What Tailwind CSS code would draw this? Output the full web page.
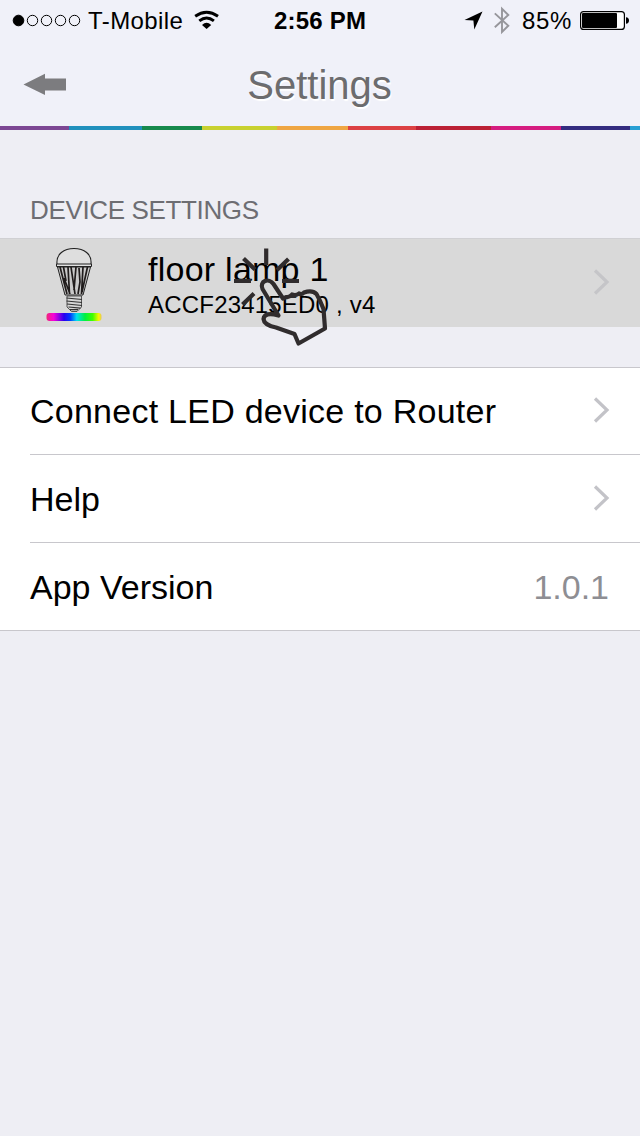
<!DOCTYPE html>
<html lang="en">
<head>
<meta charset="utf-8">
<title>Settings</title>
<script src="https://cdn.jsdelivr.net/npm/@tailwindcss/browser@4"></script>
</head>
<body class="bg-[#eeeef4] font-['Liberation_Sans',Arial,sans-serif] text-black">
<div class="flex h-[1136px] w-[640px] flex-col overflow-hidden">
  <header class="flex h-[130px] flex-col bg-[#f0f1f9]">
    <div class="grid h-10 grid-cols-[274px_92px_1fr] items-center text-2xl leading-10 whitespace-nowrap">
      <div class="flex h-10 items-center pl-3">
        <svg class="w-[70px] shrink-0" height="40" viewBox="12 0 70 40" fill="none" stroke="#000" stroke-width="1">
          <circle cx="18.5" cy="20.5" r="5.3" fill="#000"/><circle cx="32.5" cy="20.5" r="5.2"/><circle cx="46.5" cy="20.5" r="5.2"/><circle cx="60.5" cy="20.5" r="5.2"/><circle cx="74.5" cy="20.5" r="5.2"/>
        </svg>
        <span class="ml-1.5 h-10 w-[106px] pt-px tracking-[0.4px]">T-Mobile</span>
        <svg class="shrink-0" width="26" height="40" viewBox="194 0 26 40" fill="none" stroke="#000" stroke-width="2.9">
          <path d="M195.2 16.2Q206.6 8.2 218 16.2M199.3 20.8Q206.6 15 213.9 20.8"/>
          <path d="M202 24.900Q206.600 20.800 211.200 24.900L206.600 29Z" fill="#000" stroke="none"/>
        </svg>
      </div>
      <span class="h-10 pt-px font-bold tracking-[0.2px]">2:56 PM</span>
      <div class="flex h-10 items-center pl-[98px]">
        <svg class="shrink-0" width="50" height="40" viewBox="464 0 50 40">
          <path d="M464.5 20L482.5 11.5L474.3 29.5L473.4 20.5Z"/>
          <path d="M494.8 13.4L508.3 25.8L502 32V8.8L508.3 15L494.8 27.2" fill="none" stroke="#96969b" stroke-width="1.9"/>
        </svg>
        <span class="ml-2 h-10 w-[58px] pt-px tracking-[0.7px]">85%</span>
        <svg class="shrink-0" width="50" height="40" viewBox="580 0 50 40">
          <rect x="580.6" y="11.6" width="43.8" height="17.8" rx="3" fill="#fff" stroke="#000" stroke-width="1.2"/>
          <rect x="582" y="13" width="35" height="15" rx="1"/>
          <path d="M626 17.2Q629 17.5 629 20.5T626 23.8Z"/>
        </svg>
      </div>
    </div>
    <div class="grid h-[86px] grid-cols-[120px_399px_121px]">
      <svg width="120" height="86" viewBox="0 40 120 86"><path d="M23.5 84.5L45 73.8V78.5H66V90.5H45V95Z" fill="#7c7c7f"/></svg>
      <h1 class="pt-[22px] text-center text-[40px] leading-[46px] text-[#6c6c6e] [text-shadow:1px_2px_1px_#fff]">Settings</h1>
    </div>
    <div class="flex h-1">
      <i class="w-[69px] bg-[#7c4794]"></i><i class="w-[73px] bg-[#2090bd]"></i><i class="w-[60px] bg-[#16894d]"></i><i class="w-[75px] bg-[#c8d130]"></i><i class="w-[71px] bg-[#efa643]"></i><i class="w-[68px] bg-[#dc4144]"></i><i class="w-[75px] bg-[#bb2036]"></i><i class="w-[70px] bg-[#d51c80]"></i><i class="w-[69px] bg-[#332c80]"></i><i class="w-[10px] bg-[#289fd4]"></i>
    </div>
  </header>

  <h2 class="h-[108px] pt-[65px] pl-[30px] text-[26px] leading-[30px] tracking-[-0.36px] text-[#6d6d72]">DEVICE SETTINGS</h2>

  <section class="relative flex h-[89px] border-t border-[#d0d0d3] bg-[#d9d9d9]">
    <svg class="shrink-0" width="148" height="88" viewBox="0 239 148 88">
      <defs><linearGradient id="spectrum"><stop stop-color="#f02878"/><stop offset=".13" stop-color="#f800d8"/><stop offset=".32" stop-color="#2800f0"/><stop offset=".43" stop-color="#0038ff"/><stop offset=".55" stop-color="#00e0f0"/><stop offset=".7" stop-color="#00f040"/><stop offset=".84" stop-color="#40ff00"/><stop offset=".95" stop-color="#f8f800"/><stop offset="1" stop-color="#e8c858"/></linearGradient></defs>
      <path d="M57 264C56 254 64 248.500 74 248.500S92 254 91 264" fill="#dedede" stroke="#222" stroke-width="1.1"/>
      <path d="M56.500 264H91.500V266.500H56.500Z" fill="#e2e2e2" stroke="#222" stroke-width="1"/>
      <path d="M57.500 267L65 295H83L90.500 267Z" fill="#c9c9c9" stroke="#222" stroke-width="1"/>
      <path d="M60 267L67 294M63.500 267L66 281M68 267L69.500 294M64 278L70 294M71 267L75 294M76 267L74 290M79 268L80 282L78 294M83 267L81.500 294M87.500 267L82 292" stroke="#201c1c" stroke-width="1.7" fill="none"/>
      <path d="M67 296H81.500V307L77 311.500H71.500L67 307Z" fill="#d6d6d6" stroke="#333" stroke-width=".8"/>
      <path d="M66.500 298L82 299.500M66.500 301L82 302.500M67 304L82 305.500M68.500 307L80.500 308.200M70 309.700H78" stroke="#333" stroke-width="1.2"/>
      <rect x="46.500" y="313" width="55" height="8" rx="3" fill="url(#spectrum)"/>
    </svg>
    <div class="flex flex-col whitespace-nowrap">
      <span class="mt-2.5 text-[34px] leading-10 tracking-[0.25px]">floor lamp 1</span>
      <span class="mt-0.5 text-2xl leading-7 tracking-[0.2px]">ACCF23415ED0 , v4</span>
    </div>
    <svg class="mt-[29px] mr-[30px] ml-auto" width="17" height="28" viewBox="0 0 17 28" fill="none" stroke="#c5c5c8" stroke-width="3.2"><path d="M2 2.500L14 14L2 25.500"/></svg>
    <svg class="absolute top-0 left-[230px]" width="104" height="110" viewBox="230 239 104 110" fill="none" stroke="#302c2d" stroke-width="4.200">
      <path d="M266.200 248.500V265M243.500 258.500L255 269.500M288.500 259L277 270M234 281H251M282 281H299M242.500 304.500L254 293.500"/>
      <path d="M278.500 315.500L262.500 289C259 281 269 277.500 273.500 284L283 298.500L286.500 297Q289.500 297.500 292 294.500Q296 296 299 293.500Q302 295 304 292.500Q312 289.500 316.500 294Q320 300 323.500 309L325 328.500L298.500 343.500L294.500 334L276 327.500Q264 325 263.500 319Q264.500 311.500 278.500 315.500Z" stroke-linejoin="round"/>
    </svg>
  </section>

  <section class="mt-10 flex h-[264px] flex-col border-y border-[#c8c7cc] bg-white text-[34px] leading-10">
    <div class="ml-[30px] flex h-[87px] border-b border-[#c8c7cc] pt-[23px] pr-[30px]">
      <span class="tracking-[0.25px]">Connect LED device to Router</span>
      <svg class="mt-[5px] ml-auto" width="17" height="28" viewBox="0 0 17 28" fill="none" stroke="#c3c3c8" stroke-width="3.2"><path d="M2 2.500L14 14L2 25.500"/></svg>
    </div>
    <div class="ml-[30px] flex h-[88px] border-b border-[#c8c7cc] pt-6 pr-[30px]">
      <span>Help</span>
      <svg class="mt-[5px] ml-auto" width="17" height="28" viewBox="0 0 17 28" fill="none" stroke="#c3c3c8" stroke-width="3.2"><path d="M2 2.500L14 14L2 25.500"/></svg>
    </div>
    <div class="ml-[30px] flex flex-1 justify-between pt-6 pr-[31px]">
      <span>App Version</span>
      <span class="text-[#8e8e93]">1.0.1</span>
    </div>
  </section>
</div>
</body>
</html>
